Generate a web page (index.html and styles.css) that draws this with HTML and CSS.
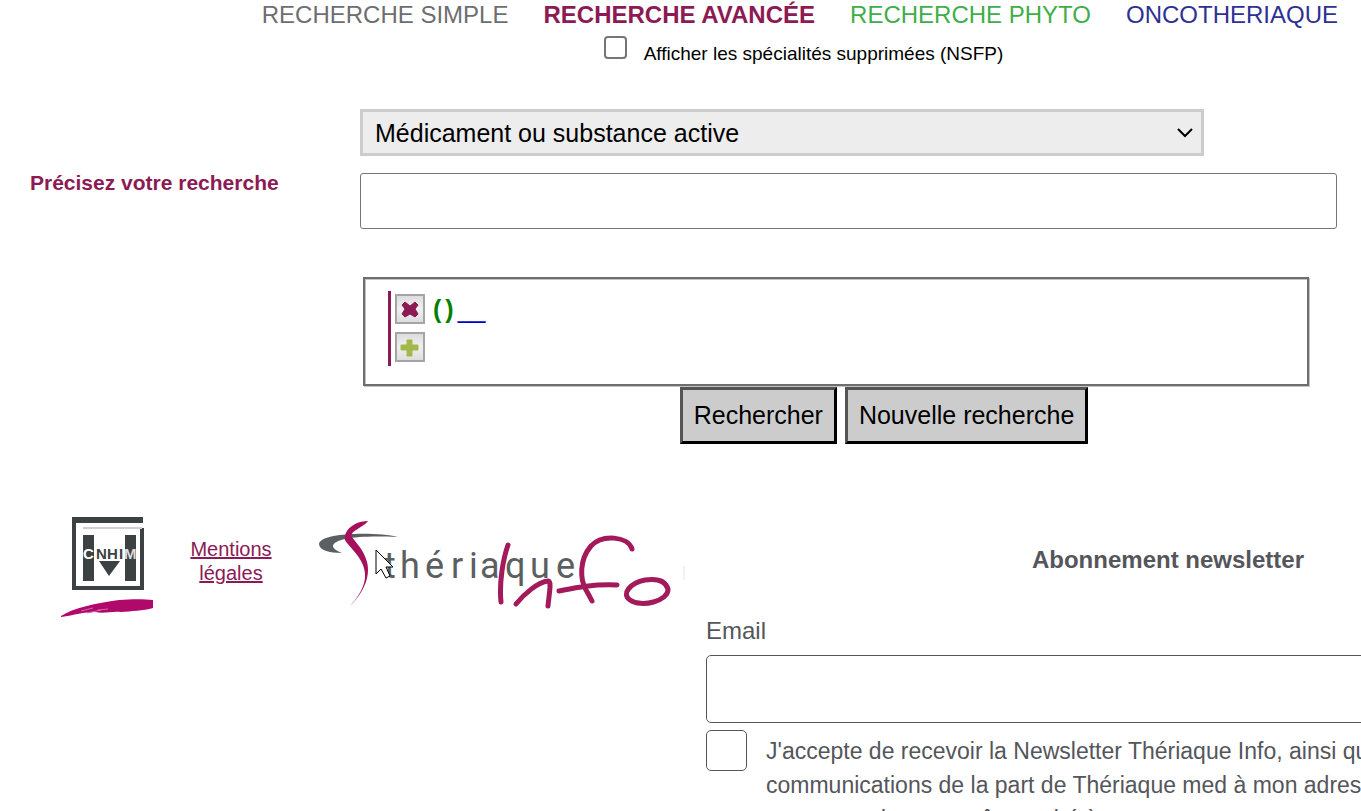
FILE: index.html
```html
<!DOCTYPE html>
<html lang="fr">
<head>
    <meta charset="UTF-8">
    <title>Thériaque - Recherche avancée</title>
    <meta name="viewport" content="width=device-width, initial-scale=1">
    <link rel="stylesheet" href="styles.css">
</head>
<body>
    <nav class="menu">
        <a class="simple" href="#">RECHERCHE SIMPLE</a>
        <a class="avancee" href="#">RECHERCHE AVANCÉE</a>
        <a class="phyto" href="#">RECHERCHE PHYTO</a>
        <a class="onco" href="#">ONCOTHERIAQUE</a>
    </nav>

    <form class="recherche">
        <div class="nsfp">
            <input type="checkbox" id="nsfp">
            <label for="nsfp">Afficher les spécialités supprimées (NSFP)</label>
        </div>
        <div class="criteres">
            <label class="titre" for="texte">Précisez votre recherche</label>
            <div class="champs">
                <div class="liste">
                    <select id="type" aria-label="Type de recherche">
                        <option>Médicament ou substance active</option>
                    </select>
                    <svg class="fleche" width="18" height="12" viewBox="0 0 18 12"><path d="M2 2l7 7 7-7" fill="none" stroke="#000" stroke-width="2"/></svg>
                </div>
                <input type="text" id="texte" class="texte">
                <div class="requete">
                    <div class="bloc">
                        <div class="ligne">
                            <button type="button" class="icone" aria-label="Supprimer">
                                <svg width="30" height="30" viewBox="0 0 30 30">
                                    <path d="M10 8l5 4 5-4 3 3-3 4 3 5-3 3-5-3-5 3-3-3 3-5-3-4z" fill="#8b1a55" stroke="#8b1a55" stroke-linejoin="round"/>
                                </svg>
                            </button>
                            <span class="expr">()</span><a class="vide" href="#">__</a>
                        </div>
                        <div class="ligne">
                            <button type="button" class="icone" aria-label="Ajouter">
                                <svg width="30" height="30" viewBox="0 0 30 30">
                                    <path d="M12 8h5v5h6v5h-6v6h-5v-6H6v-5h6z" fill="#a3b84b" stroke="#a3b84b" stroke-linejoin="round"/>
                                </svg>
                            </button>
                        </div>
                    </div>
                </div>
                <div class="actions">
                    <button type="submit">Rechercher</button>
                    <button type="reset">Nouvelle recherche</button>
                </div>
            </div>
        </div>
    </form>

    <footer class="pied">
        <svg class="cnhim" width="94" height="102" viewBox="0 0 94 102">
            <path d="M11 0h71v6H15v63h64V11h4v62H11z" fill="#3c4143"/>
            <path d="M22 11h59" stroke="#d0d0d0" stroke-width="2"/>
            <path d="M22 18h11v46H22zM64 18h11v46H64z" fill="#3c4143"/>
            <path d="M38 44h21L48 59z" fill="#3c4143"/>
            <text class="sigle" y="42" x="22 35 46 58 63"><tspan fill="#fff">C</tspan>NHI<tspan fill="#ddd">M</tspan></text>
            <path d="M0 99C12 91 35 86 58 83c13-1 25-1 34 0v8c-10 3-22 3-32 4-10-1-16 2-26 0-12 0-20 3-34 5z" fill="#b0096b"/>
            <path d="M20 94l12-3M26 96l14-3M37 93l10-1" stroke="#d668a8"/>
        </svg>
        <a class="mentions" href="#">Mentions légales</a>
        <svg class="theriaque" width="366" height="96" viewBox="0 0 366 96">
            <path d="M79 19C58 14 2 14 0 26c0 6 10 9 23 9-7-3-9-5-9-7 1-8 28-11 65-9z" fill="#5c5f62"/>
            <path d="M49 3c-9 0-17 4-21 10-3 5-3 9 0 12 6 7 11 12 14 18 9 16 2 31-11 45 14-13 22-32 16-47-3-10-10-16-14-22-3-6 11-9 16-16z" fill="#a4105c"/>
            <text class="marque" y="60" x="65 81 106 132 150 161 186 211 237">thériaque</text>
            <g fill="none" stroke="#a31a5b" stroke-width="5" stroke-linecap="round" stroke-linejoin="round">
                <path d="M189 27c-5 14-9 38-7 57"/>
                <path d="M197 86c8-10 22-22 32-23 4 0 1 13 0 25"/>
                <path d="M313 31c-4-13-30-15-41-3-12 14-11 33-5 44 3 5 4 7 6 11"/>
                <path d="M240 73c15-3 32-7 58-6"/>
                <path d="M326 62c14-2 21 2 23 9 1 12-27 19-38 11-9-6 0-17 15-20z"/>
            </g>
            <path class="curseur" d="M57 32v24l5-5 5 9 4-2-4-9h7z"/>
            <path d="M365 48v14" stroke="#e5e5e5"/>
        </svg>
        <form class="newsletter">
            <h2>Abonnement newsletter</h2>
            <label for="email">Email</label>
            <input type="email" id="email">
            <div class="accord">
                <input type="checkbox" id="accord">
                <label for="accord">J'accepte de recevoir la Newsletter Thériaque Info, ainsi qu'éventuellement des<br>communications de la part de Thériaque med à mon adresse email,<br>mon accord pouvant être retiré à tout moment.</label>
            </div>
        </form>
    </footer>
</body>
</html>
```
FILE: styles.css
```css
* {
    box-sizing: border-box;
}
html, body {
    margin: 0;
    padding: 0;
    height: 100%;
    overflow: hidden;
    background: #fff;
    font-family: "Liberation Sans", Arial, Helvetica, sans-serif;
}
input, select, button {
    margin: 0;
    font-family: inherit;
    color: #000;
}
input[type=checkbox] {
    appearance: none;
    flex: none;
    background: #fff;
}

/* menu */
.menu {
    display: flex;
    justify-content: flex-end;
    gap: 35px;
    padding-right: 23px;
    font-size: 24px;
    line-height: 30px;
}
.menu a {
    text-decoration: none;
    white-space: nowrap;
}
.menu .simple {
    color: #6d6e71;
}
.menu .avancee {
    color: #8b1a55;
    font-weight: bold;
}
.menu .phyto {
    color: #3fae49;
}
.menu .onco {
    color: #2e3192;
}

/* recherche */
.nsfp {
    display: flex;
    justify-content: center;
    gap: 17px;
    padding: 6px 0 0 246px;
    font-size: 19px;
    line-height: 36px;
}
.nsfp input {
    width: 23px;
    height: 23px;
    border: 2px solid #767676;
    border-radius: 4px;
}
.criteres {
    display: flex;
    padding: 37px 24px 0 30px;
}
.titre {
    flex: none;
    width: 330px;
    padding-top: 62px;
    font-size: 21px;
    line-height: 24px;
    font-weight: bold;
    color: #8b1a55;
}
.champs {
    flex: 1;
}
.liste {
    position: relative;
    margin-right: 133px;
}
.liste select {
    display: block;
    appearance: none;
    width: 100%;
    height: 47px;
    padding: 0 12px;
    border: 3px solid #ccc;
    border-radius: 0;
    background: #ededed;
    font-size: 25px;
}
.fleche {
    position: absolute;
    top: 18px;
    right: 10px;
    pointer-events: none;
}
.texte {
    display: block;
    width: 100%;
    height: 56px;
    margin-top: 17px;
    padding: 0 12px;
    border: 1px solid #767676;
    border-radius: 3px;
    font-size: 25px;
}
.requete {
    margin: 48px 28px 0 3px;
    padding: 12px 23px 18px;
    border: 2px solid #6d6e71;
    box-shadow: inset 1px 1px #c4c4c4, 1px 1px #c4c4c4;
}
.bloc {
    padding: 3px 0 4px 4px;
    border-left: 3px solid #8b1a55;
}
.ligne {
    display: flex;
    align-items: center;
    font-size: 25px;
    line-height: 30px;
}
.ligne + .ligne {
    margin-top: 8px;
}
.icone {
    width: 30px;
    height: 30px;
    margin-right: 8px;
    padding: 0;
    border: 2px solid #a5a5a5;
    background: linear-gradient(#ddd, #f0f0f0 50%, #ddd);
}
.icone svg {
    display: block;
    margin: -2px;
}
.expr {
    color: #008000;
    font-weight: bold;
    letter-spacing: 4px;
}
.vide {
    color: #00c;
    text-decoration: none;
}
.actions {
    display: flex;
    justify-content: center;
    gap: 8px;
    padding: 1px 0 0 71px;
}
.actions button {
    height: 57px;
    padding: 0 11px;
    border: 3px outset #000;
    background: #ccc;
    font-size: 25px;
    white-space: nowrap;
}

/* pied de page */
.pied {
    display: flex;
    align-items: flex-start;
    padding: 73px 0 0 61px;
    color: #54565b;
}
.pied > * {
    flex: none;
}
.sigle {
    font-size: 15px;
    font-weight: bold;
    fill: #3c4143;
}
.mentions {
    width: 100px;
    margin: 20px 0 0 26px;
    font-size: 20px;
    line-height: 24px;
    text-align: center;
    color: #8b1a55;
}
.theriaque {
    margin: 1px 0 0 38px;
}
.marque {
    font-family: Roboto, sans-serif;
    font-size: 36px;
    fill: #5c5f62;
}
.curseur {
    fill: #fff;
    stroke: #000;
}
.newsletter {
    width: 924px;
    margin-left: 21px;
    padding-top: 28px;
    font-size: 23px;
    line-height: 34px;
}
.newsletter h2 {
    margin: 0 0 41px;
    font-size: 24px;
    line-height: 30px;
    text-align: center;
}
.newsletter > label {
    display: block;
    font-size: 24px;
    line-height: 30px;
}
.newsletter input[type=email] {
    display: block;
    width: 100%;
    height: 68px;
    margin: 9px 0 7px;
    padding: 0 12px;
    border: 1px solid #54565b;
    border-radius: 5px;
    font-size: 24px;
}
.accord {
    display: flex;
    gap: 19px;
}
.accord input {
    width: 41px;
    height: 41px;
    border: 1px solid #54565b;
    border-radius: 5px;
}
.accord label {
    padding-top: 4px;
    white-space: nowrap;
}
```
